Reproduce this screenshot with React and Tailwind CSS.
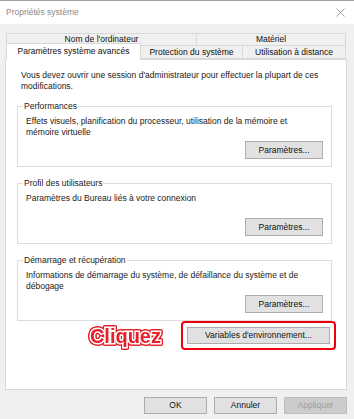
import React from "react";

function Bouton({ children, className = "", disabled = false }) {
  return (
    <div
      className={
        "flex items-center justify-center border text-[8.5px] leading-none " +
        (disabled
          ? "border-[#bfbfbf] bg-[#cccccc] text-[#9d9d9d] "
          : "border-[#adadad] bg-[#e1e1e1] text-[#111] ") +
        className
      }
    >
      {children}
    </div>
  );
}

function Groupe({ titre, children }) {
  return (
    <div className="relative flex h-[61px] flex-col border border-[#dcdcdc] pb-[7px] pl-[8px] pr-[8px] pt-[9px]">
      <span className="absolute -top-[7px] left-[5px] bg-white px-[1px] text-[8.5px] leading-[12px] text-[#1a1a1a]">
        {titre}
      </span>
      <div className="whitespace-nowrap text-[8.5px] leading-[11px] text-[#1a1a1a]">{children}</div>
      <div className="mt-auto flex justify-end">
        <Bouton className="h-[18px] w-[78px]">Paramètres...</Bouton>
      </div>
    </div>
  );
}

export default function App() {
  return (
    <div className="flex h-[419px] w-[354px] flex-col overflow-hidden bg-[#f0f0f0] font-['Liberation_Sans',Arial,sans-serif]">
      <div className="h-px bg-[#a3a3a3]" />

      {/* barre de titre */}
      <div className="flex h-[23px] items-center justify-between bg-white pl-[6px] pr-[9px]">
        <span className="text-[8.5px] text-[#8a8a8a]">Propriétés système</span>
        <svg width="9" height="9" viewBox="0 0 9 9">
          <path d="M0.5 0.5 L8.5 8.5 M8.5 0.5 L0.5 8.5" stroke="#9a9a9a" strokeWidth="0.9" />
        </svg>
      </div>

      <div className="ml-[5px] w-[342px] pt-[9px]">
        {/* onglets arrière */}
        <div className="mx-[1px] flex h-[12px] text-[8.5px] leading-none text-[#111]">
          <div className="flex w-[191px] items-center justify-center border border-b-0 border-[#d9d9d9]">
            Nom de l'ordinateur
          </div>
          <div className="flex flex-1 items-center justify-center border border-b-0 border-l-0 border-[#d9d9d9]">
            Matériel
          </div>
        </div>
        {/* onglets avant */}
        <div className="mx-[1px] flex h-[14px] items-end text-[8.5px] leading-none text-[#111]">
          <div className="relative z-10 -mb-px flex h-[17px] w-[135px] items-center justify-center border border-b-0 border-[#d9d9d9] bg-white pb-[1px]">
            Paramètres système avancés
          </div>
          <div className="flex h-[14px] w-[102px] items-center justify-center border border-l-0 border-[#d9d9d9]">
            Protection du système
          </div>
          <div className="flex h-[14px] flex-1 items-center justify-center border border-l-0 border-[#d9d9d9]">
            Utilisation à distance
          </div>
        </div>

        {/* panneau */}
        <div className="flex h-[331px] flex-col border border-[#d9d9d9] bg-white pl-[11px] pr-[14px] pt-[10px]">
          <p className="whitespace-nowrap pl-[4px] text-[8.5px] leading-[11px] text-[#1a1a1a]">
            Vous devez ouvrir une session d'administrateur pour effectuer la plupart de ces
            <br />
            modifications.
          </p>

          <div className="mt-[14px] flex flex-col gap-[16px]">
            <Groupe titre="Performances">
              Effets visuels, planification du processeur, utilisation de la mémoire et
              <br />
              mémoire virtuelle
            </Groupe>
            <Groupe titre="Profil des utilisateurs">Paramètres du Bureau liés à votre connexion</Groupe>
            <Groupe titre="Démarrage et récupération">
              Informations de démarrage du système, de défaillance du système et de
              <br />
              débogage
            </Groupe>
          </div>

          <div className="flex items-center justify-end gap-[20px] pr-[-4px]">
            <span className="text-[20px] font-bold leading-none text-[#e8202a] [-webkit-text-stroke:3px_white] [paint-order:stroke_fill] [filter:drop-shadow(1px_0_0_#e31b23)_drop-shadow(-1px_0_0_#e31b23)_drop-shadow(0_1px_0_#e31b23)_drop-shadow(0_-1px_0_#e31b23)]">
              Cliquez
            </span>
            <div className="mr-[-4px] rounded-[4px] border-2 border-[#f0000f] p-[4px]">
              <Bouton className="h-[17px] w-[143px]">Variables d'environnement...</Bouton>
            </div>
          </div>
        </div>
      </div>

      {/* boutons du bas */}
      <div className="flex justify-end gap-[7px] pr-[7px] pt-[7px]">
        <Bouton className="h-[17px] w-[63px]">OK</Bouton>
        <Bouton className="h-[17px] w-[63px]">Annuler</Bouton>
        <Bouton className="h-[17px] w-[63px]" disabled>
          Appliquer
        </Bouton>
      </div>
    </div>
  );
}
